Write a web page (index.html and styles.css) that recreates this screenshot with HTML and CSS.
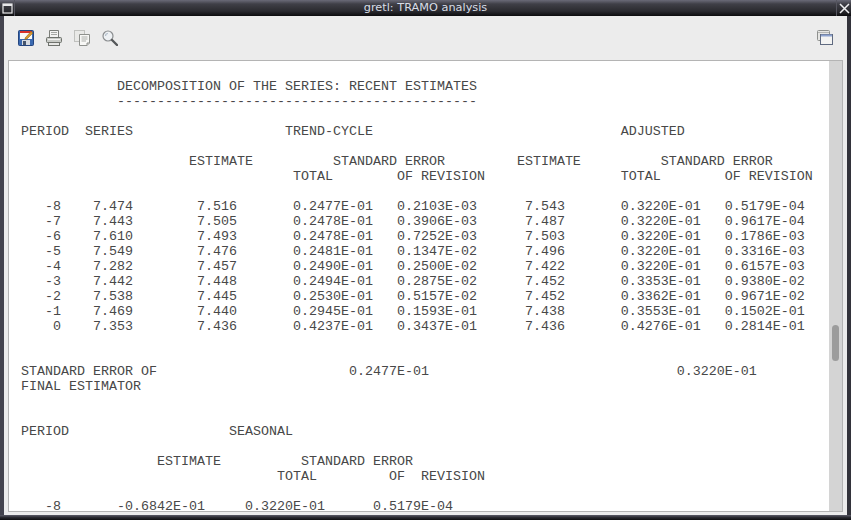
FILE: index.html
```html
<!DOCTYPE html>
<html lang="en">
<head>
  <meta charset="UTF-8">
  <title>gretl: TRAMO analysis</title>
  <link rel="stylesheet" href="styles.css">
</head>
<body>
  <div class="window">
    <!-- Title bar -->
    <div class="titlebar">
      <div class="wm-btn">
        <svg width="11" height="11" viewBox="0 0 11 11"><rect x="1" y="1" width="9" height="9" fill="none" stroke="#e8e8ea" stroke-width="1.2"/><rect x="1" y="1" width="9" height="2" fill="#e8e8ea"/></svg>
      </div>
      <div class="title">gretl: TRAMO analysis</div>
      <div class="wm-btn wm-close">
        <svg width="11" height="11" viewBox="0 0 11 11"><path d="M1 1L10 10M10 1L1 10" stroke="#f0f0f2" stroke-width="1.5"/></svg>
      </div>
    </div>

    <div class="content">
      <!-- Toolbar -->
      <div class="toolbar">
        <div class="tools">
          <svg class="icon" width="16" height="16" viewBox="0 0 16 16">
            <rect x="0.5" y="0.5" width="15" height="15" rx="1" fill="#3a69b0" stroke="#24457f"/>
            <rect x="2" y="1" width="12" height="8" fill="#fbfbf8"/>
            <rect x="2" y="1" width="12" height="2" fill="#d8322c"/>
            <rect x="4" y="10" width="8" height="5" fill="#d6dae0"/>
            <rect x="5" y="11" width="3" height="4" fill="#44546c"/>
            <path d="M7 8L13 1.5L15 3L9 9L7 9.5Z" fill="#d99a2e" stroke="#7d5a1c" stroke-width="0.5"/>
          </svg>
          <svg class="icon" width="16" height="16" viewBox="0 0 16 16">
            <path d="M3.5 7V0.5H12.5V7" fill="#f4f4f2" stroke="#7c7f7a"/>
            <path d="M5 2.5H11M5 4.5H11" stroke="#a6a8a4"/>
            <rect x="0.5" y="7.5" width="15" height="5" rx="1" fill="#c9cbc7" stroke="#6f726d"/>
            <rect x="2.5" y="12.5" width="11" height="3" fill="#e8e8e6" stroke="#6f726d"/>
            <path d="M2 9.5H14" stroke="#f2f2f0"/>
          </svg>
          <svg class="icon" width="16" height="16" viewBox="0 0 16 16">
            <rect x="0.5" y="0.5" width="10" height="11" fill="#e9e9e7" stroke="#c0c1be"/>
            <path d="M5.5 4.5H15.5V13L13 15.5H5.5Z" fill="#f8f8f6" stroke="#8f918d"/>
            <path d="M7.5 7H13.5M7.5 9H13.5M7.5 11H12" stroke="#adafab"/>
            <path d="M15.5 13H13V15.5" fill="#d5d5d3" stroke="#8f918d"/>
          </svg>
          <svg class="icon" width="16" height="16" viewBox="0 0 16 16">
            <circle cx="6" cy="6" r="5" fill="#eef1f4" stroke="#8b8e90" stroke-width="1.2"/>
            <path d="M3.5 6A2.5 2.5 0 0 1 6 3.5" fill="none" stroke="#b4c0cc" stroke-width="1.2"/>
            <path d="M10 10L15 15" stroke="#55585a" stroke-width="2.4" stroke-linecap="round"/>
          </svg>
        </div>
        <svg class="icon" width="16" height="16" viewBox="0 0 16 16">
          <rect x="0.5" y="0.5" width="12" height="10" rx="1" fill="#e6e6e4" stroke="#8e908e"/>
          <path d="M1 2.5H12" stroke="#b5b6b4"/>
          <rect x="3.5" y="4.5" width="12" height="10" fill="#f3f3f2" stroke="#5f6a80"/>
          <path d="M4 5.5H15" stroke="#8ea3cf" stroke-width="2"/>
        </svg>
      </div>

      <!-- Text view with scrollbar -->
      <div class="text-frame">
        <pre class="output">

            DECOMPOSITION OF THE SERIES: RECENT ESTIMATES
            ---------------------------------------------

PERIOD  SERIES                   TREND-CYCLE                               ADJUSTED

                     ESTIMATE          STANDARD ERROR         ESTIMATE          STANDARD ERROR
                                  TOTAL        OF REVISION                 TOTAL        OF REVISION

   -8    7.474        7.516       0.2477E-01   0.2103E-03      7.543       0.3220E-01   0.5179E-04
   -7    7.443        7.505       0.2478E-01   0.3906E-03      7.487       0.3220E-01   0.9617E-04
   -6    7.610        7.493       0.2478E-01   0.7252E-03      7.503       0.3220E-01   0.1786E-03
   -5    7.549        7.476       0.2481E-01   0.1347E-02      7.496       0.3220E-01   0.3316E-03
   -4    7.282        7.457       0.2490E-01   0.2500E-02      7.422       0.3220E-01   0.6157E-03
   -3    7.442        7.448       0.2494E-01   0.2875E-02      7.452       0.3353E-01   0.9380E-02
   -2    7.538        7.445       0.2530E-01   0.5157E-02      7.452       0.3362E-01   0.9671E-02
   -1    7.469        7.440       0.2945E-01   0.1593E-01      7.438       0.3553E-01   0.1502E-01
    0    7.353        7.436       0.4237E-01   0.3437E-01      7.436       0.4276E-01   0.2814E-01


STANDARD ERROR OF                        0.2477E-01                               0.3220E-01
FINAL ESTIMATOR


PERIOD                    SEASONAL

                 ESTIMATE          STANDARD ERROR
                                TOTAL         OF  REVISION

   -8       -0.6842E-01     0.3220E-01      0.5179E-04
</pre>
        <div class="scrollbar">
          <div class="scroll-thumb"></div>
        </div>
      </div>
    </div>
    <div class="bottom-border"></div>
  </div>
</body>
</html>
```

FILE: styles.css
```css
/* Reset and base styling */
* {
  margin: 0;
  padding: 0;
  box-sizing: border-box;
}

body {
  width: 851px;
  height: 520px;
  overflow: hidden;
  background-color: #ececec;
}

.window {
  width: 851px;
  height: 520px;
  display: flex;
  flex-direction: column;
}

/* Title bar */
.titlebar {
  height: 16px;
  display: flex;
  align-items: stretch;
  background: linear-gradient(#6a6a78, #3f3f47 25%, #2a2a2f 70%, #0c0c0e);
}

.title {
  flex: 1;
  text-align: center;
  font-family: "DejaVu Sans", sans-serif;
  font-size: 11.3px;
  line-height: 15px;
  color: #d8dde6;
}

.wm-btn {
  width: 15px;
  display: flex;
  align-items: center;
  justify-content: center;
  border-right: 1px solid #55555f;
}

.wm-close {
  border-right: none;
  border-left: 1px solid #55555f;
}

/* Main area */
.content {
  flex: 1;
  min-height: 0;
  display: flex;
  flex-direction: column;
  border-left: 4px solid #44444f;
  border-right: 4px solid #33333b;
  padding: 0 4px 3px 4px;
  background-color: #ececec;
}

/* Toolbar */
.toolbar {
  height: 44px;
  display: flex;
  align-items: center;
  justify-content: space-between;
  padding: 0 10px 0 10px;
}

.tools {
  display: flex;
  gap: 12px;
}

.icon {
  display: block;
}

/* Text view */
.text-frame {
  flex: 1;
  min-height: 0;
  display: flex;
  border: 1px solid #b4b4b4;
}

.output {
  flex: 1;
  min-width: 0;
  overflow: hidden;
  background-color: #fff;
  padding: 3px 0 0 12px;
  font-family: "Liberation Mono", monospace;
  font-size: 13.33px;
  line-height: 15px;
  color: #484848;
}

.scrollbar {
  width: 13px;
  background-color: #d4d4d4;
  padding-top: 264px;
  display: flex;
  justify-content: center;
}

.scroll-thumb {
  width: 7px;
  height: 36px;
  border-radius: 4px;
  background-color: #9c9c9c;
}

.bottom-border {
  height: 5px;
  background: linear-gradient(#5c5c68, #2a2a30 50%, #0e0e10);
}
```
